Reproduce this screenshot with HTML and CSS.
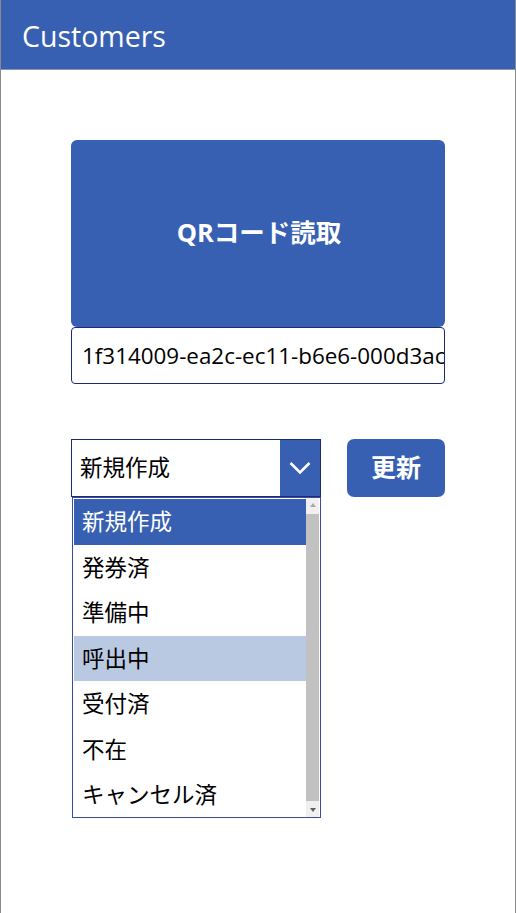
FILE: index.html
```html
<!DOCTYPE html>
<html lang="ja">
<head>
<meta charset="utf-8">
<link rel="stylesheet" href="styles.css">
</head>
<body>
<div class="app">
  <header class="header">Customers</header>
  <main class="content">
    <button class="qr-btn">QRコード読取</button>
    <div class="id-input">1f314009-ea2c-ec11-b6e6-000d3ac0b1f2</div>
    <div class="row">
      <div class="dropdown-wrap">
        <div class="dropdown">
          <span class="dd-value">新規作成</span>
          <span class="dd-chevron">
            <svg width="22" height="14" viewBox="0 0 22 14"><path d="M1.5 2 L11 11.5 L20.5 2" fill="none" stroke="#fff" stroke-width="2.6"/></svg>
          </span>
        </div>
        <div class="dd-list">
          <ul class="dd-items">
            <li class="item selected">新規作成</li>
            <li class="item">発券済</li>
            <li class="item">準備中</li>
            <li class="item hover">呼出中</li>
            <li class="item">受付済</li>
            <li class="item">不在</li>
            <li class="item">キャンセル済</li>
          </ul>
          <div class="scrollbar">
            <span class="arrow up"></span>
            <span class="thumb"></span>
            <span class="arrow down"></span>
          </div>
        </div>
      </div>
      <button class="update-btn">更新</button>
    </div>
  </main>
</div>
</body>
</html>
```
FILE: styles.css
```css
html, body {
  margin: 0;
  padding: 0;
  background: #fff;
}
.app {
  width: 516px;
  height: 913px;
  box-sizing: border-box;
  border-left: 1px solid #8a8a8a;
  border-right: 1px solid #8a8a8a;
  font-family: "Open Sans", "Noto Sans CJK JP", sans-serif;
  overflow: hidden;
}
.header {
  height: 70px;
  box-sizing: border-box;
  background: #3760b2;
  border-bottom: 1px solid #8894b8;
  color: #fff;
  font-size: 28.5px;
  line-height: 72px;
  padding-left: 21px;
}
.content {
  padding: 70px 0 0 70px;
  width: 374px;
}
.qr-btn {
  display: flex;
  align-items: center;
  justify-content: center;
  width: 374px;
  height: 187px;
  margin: 0;
  border: none;
  border-radius: 6px;
  background: #3760b2;
  color: #fff;
  font-family: "Open Sans", "Noto Sans CJK JP", sans-serif;
  font-weight: 700;
  font-size: 25.5px;
  padding: 0 0 6px 2px;
}
.id-input {
  box-sizing: border-box;
  width: 374px;
  height: 57px;
  border: 1px solid #1c2a78;
  border-radius: 4px;
  font-size: 22.4px;
  line-height: 55px;
  padding-left: 10px;
  white-space: nowrap;
  overflow: hidden;
  color: #000;
}
.row {
  display: flex;
  align-items: flex-start;
  gap: 26px;
  margin-top: 55px;
}
.dropdown-wrap {
  position: relative;
  width: 250px;
}
.dropdown {
  box-sizing: border-box;
  display: flex;
  height: 58px;
  border: 1px solid #1c2a78;
}
.dd-value {
  flex: 1;
  font-size: 22.5px;
  line-height: 55px;
  padding-left: 8px;
  color: #000;
}
.dd-chevron {
  width: 40px;
  background: #3760b2;
  display: flex;
  align-items: center;
  justify-content: center;
}
.dd-list {
  position: absolute;
  left: 1px;
  top: 58px;
  width: 249px;
  height: 321px;
  box-sizing: border-box;
  border: 1px solid #3a4c9c;
  background: #fff;
  display: flex;
  padding: 1px;
}
.dd-items {
  list-style: none;
  margin: 0;
  padding: 0;
  flex: 1;
}
.item {
  height: 45.5px;
  line-height: 45px;
  padding-left: 8px;
  font-size: 22.5px;
  color: #000;
  border-bottom: 0.5px solid transparent;
  box-sizing: border-box;
}
.item.selected {
  background: #3760b2;
  color: #fff;
}
.item.hover {
  background: #b9c9e2;
}
.scrollbar {
  width: 13px;
  background: #f0f0f0;
  display: flex;
  flex-direction: column;
  align-items: center;
  margin-top: -1px;
  margin-bottom: -1px;
}
.arrow {
  width: 0;
  height: 0;
  border-left: 3.5px solid transparent;
  border-right: 3.5px solid transparent;
  margin: 5px 0;
}
.arrow.up {
  border-bottom: 4px solid #a8a8a8;
}
.arrow.down {
  border-top: 4px solid #606060;
}
.thumb {
  width: 13px;
  flex: 1;
  background: #c1c1c1;
  margin: 2px 0;
}
.update-btn {
  width: 98px;
  height: 58px;
  margin: 0;
  border: none;
  border-radius: 7px;
  background: #3760b2;
  color: #fff;
  font-family: "Open Sans", "Noto Sans CJK JP", sans-serif;
  font-weight: 700;
  font-size: 25px;
  padding: 0 0 4px 0;
}
```
